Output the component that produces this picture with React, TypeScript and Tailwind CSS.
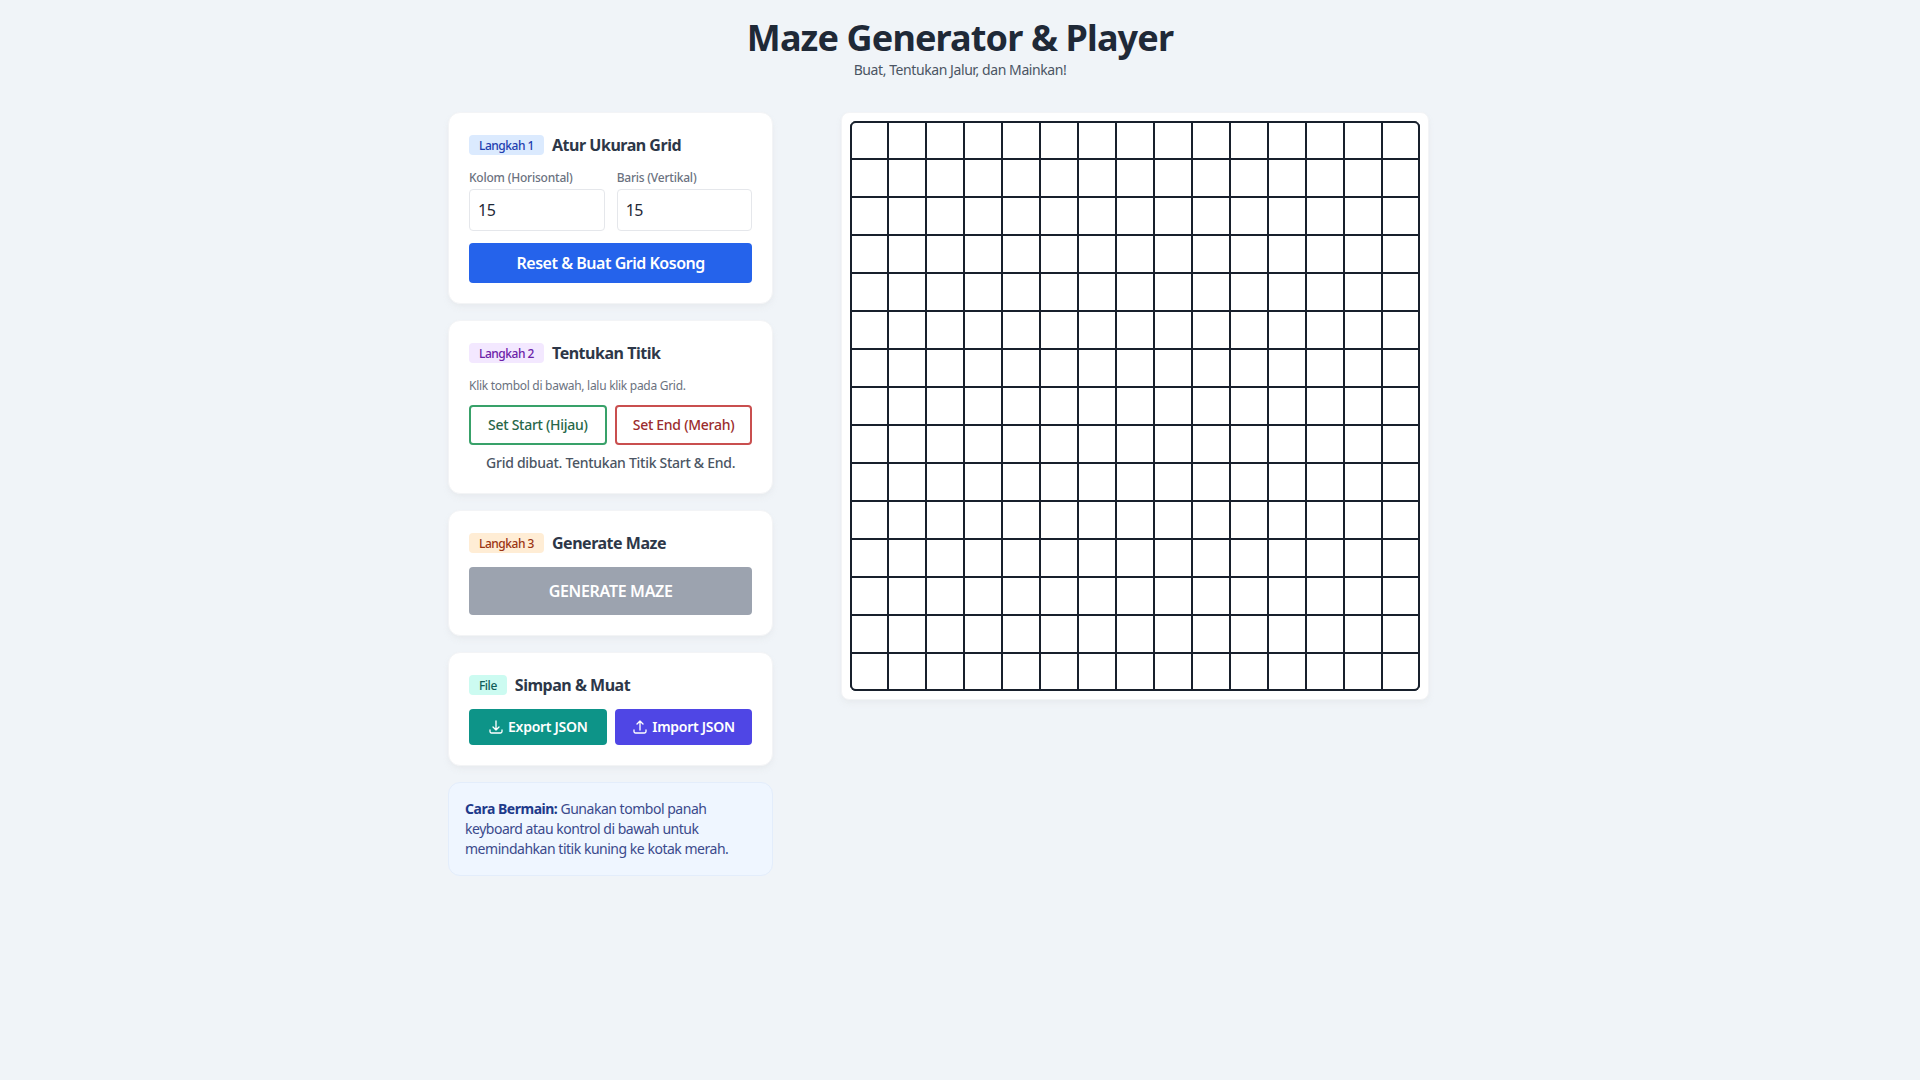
const cells = Array.from({ length: 225 }, (_, i) => i);

function DownloadIcon() {
  return (
    <svg viewBox="0 0 24 24" fill="none" stroke="currentColor" strokeWidth="2" strokeLinecap="round" strokeLinejoin="round" className="h-4 w-4">
      <path d="M3 16.5v2.25A2.25 2.25 0 0 0 5.25 21h13.5A2.25 2.25 0 0 0 21 18.75V16.5M16.5 12 12 16.5m0 0L7.5 12m4.5 4.5V3" />
    </svg>
  );
}

function UploadIcon() {
  return (
    <svg viewBox="0 0 24 24" fill="none" stroke="currentColor" strokeWidth="2" strokeLinecap="round" strokeLinejoin="round" className="h-4 w-4">
      <path d="M3 16.5v2.25A2.25 2.25 0 0 0 5.25 21h13.5A2.25 2.25 0 0 0 21 18.75V16.5m-13.5-9L12 3m0 0 4.5 4.5M12 3v13.5" />
    </svg>
  );
}

function CardTitle({ badge, badgeClass, title }: { badge: string; badgeClass: string; title: string }) {
  return (
    <div className="mb-3 flex h-6 items-center gap-2">
      <span className={`flex h-5 items-center rounded px-2.5 pt-px text-xs font-medium ${badgeClass}`}>{badge}</span>
      <h2 className="text-base font-bold text-[#2d3748]">{title}</h2>
    </div>
  );
}

function Card({ children }: { children: React.ReactNode }) {
  return <section className="rounded-xl border border-[#f3f4f6] bg-white p-5 shadow-md shadow-[#e5e7eb]/60">{children}</section>;
}

export default function App() {
  return (
    <div className="min-h-screen bg-[#f0f4f8] font-['Noto_Sans',sans-serif] tracking-[-0.03em] text-[#1f2937]">
      <div className="mx-auto w-[1024px] pt-[18px]">
        <header className="mb-8 text-center">
          <h1 className="text-4xl font-bold tracking-[-0.024em] text-[#1f2937]">Maze Generator &amp; Player</h1>
          <p className="mt-0.5 text-sm tracking-[-0.03em] text-[#4b5563]">Buat, Tentukan Jalur, dan Mainkan!</p>
        </header>

        <main className="grid grid-cols-3 items-start gap-6">
          <div className="flex flex-col gap-4">
            <Card>
              <CardTitle badge="Langkah 1" badgeClass="bg-[#dbeafe] text-[#1e40af]" title="Atur Ukuran Grid" />
              <div className="mb-3 grid grid-cols-2 gap-3">
                <label className="block">
                  <span className="mb-[3px] block pt-px text-xs font-medium tracking-[-0.018em] text-[#6b7280]">Kolom (Horisontal)</span>
                  <input readOnly value="15" className="h-[42px] w-full rounded border border-[#e5e7eb] px-2 text-base text-[#1f2937]" />
                </label>
                <label className="block">
                  <span className="mb-[3px] block pt-px text-xs font-medium tracking-[-0.018em] text-[#6b7280]">Baris (Vertikal)</span>
                  <input readOnly value="15" className="h-[42px] w-full rounded border border-[#e5e7eb] px-2 text-base text-[#1f2937]" />
                </label>
              </div>
              <button className="h-10 w-full rounded bg-[#2563eb] text-base font-semibold text-white">Reset &amp; Buat Grid Kosong</button>
            </Card>

            <Card>
              <CardTitle badge="Langkah 2" badgeClass="bg-[#f3e8ff] text-[#6b21a8]" title="Tentukan Titik" />
              <p className="mb-[11px] pt-px text-xs tracking-[-0.024em] text-[#6b7280]">Klik tombol di bawah, lalu klik pada Grid.</p>
              <div className="grid grid-cols-2 gap-2">
                <button className="h-10 rounded border-2 border-[#38a169] text-sm font-medium tracking-[-0.02em] text-[#276749]">Set Start (Hijau)</button>
                <button className="h-10 rounded border-2 border-[#c94f4f] text-sm font-medium tracking-[-0.02em] text-[#9b2c2c]">Set End (Merah)</button>
              </div>
              <p className="mt-2 text-center text-sm font-medium tracking-[-0.02em] text-[#4b5563]">Grid dibuat. Tentukan Titik Start &amp; End.</p>
            </Card>

            <Card>
              <CardTitle badge="Langkah 3" badgeClass="bg-[#ffedd5] text-[#9a3412]" title="Generate Maze" />
              <button className="h-12 w-full rounded bg-[#9ca3af] text-base font-semibold tracking-[-0.02em] text-white">GENERATE MAZE</button>
            </Card>

            <Card>
              <CardTitle badge="File" badgeClass="bg-[#ccfbf1] text-[#115e59]" title="Simpan & Muat" />
              <div className="grid grid-cols-2 gap-2">
                <button className="flex h-9 items-center justify-center gap-1 rounded bg-[#0d9488] text-sm font-semibold tracking-[-0.02em] text-white">
                  <DownloadIcon />
                  Export JSON
                </button>
                <button className="flex h-9 items-center justify-center gap-1 rounded bg-[#4f46e5] text-sm font-semibold tracking-[-0.02em] text-white">
                  <UploadIcon />
                  Import JSON
                </button>
              </div>
            </Card>

            <div className="rounded-xl border border-[#e3edfb] bg-[#eff6ff] p-4 text-sm text-[#3b4a8c]">
              <strong className="font-bold text-[#1e3a8a]">Cara Bermain:</strong> Gunakan tombol panah keyboard atau kontrol di bawah untuk memindahkan titik kuning ke kotak merah.
            </div>
          </div>

          <div className="col-span-2 flex justify-center">
            <div className="rounded-lg border border-[#f3f4f6] bg-white p-2 shadow-md shadow-[#e5e7eb]/60">
              <div className="grid h-[570px] w-[570px] grid-cols-[repeat(15,38px)] grid-rows-[repeat(15,38px)] overflow-hidden rounded-md shadow-[inset_0_0_0_2px_#18202c]">
                {cells.map((cell) => (
                  <div key={cell} className="border border-[#18202c]" />
                ))}
              </div>
            </div>
          </div>
        </main>
      </div>
    </div>
  );
}
